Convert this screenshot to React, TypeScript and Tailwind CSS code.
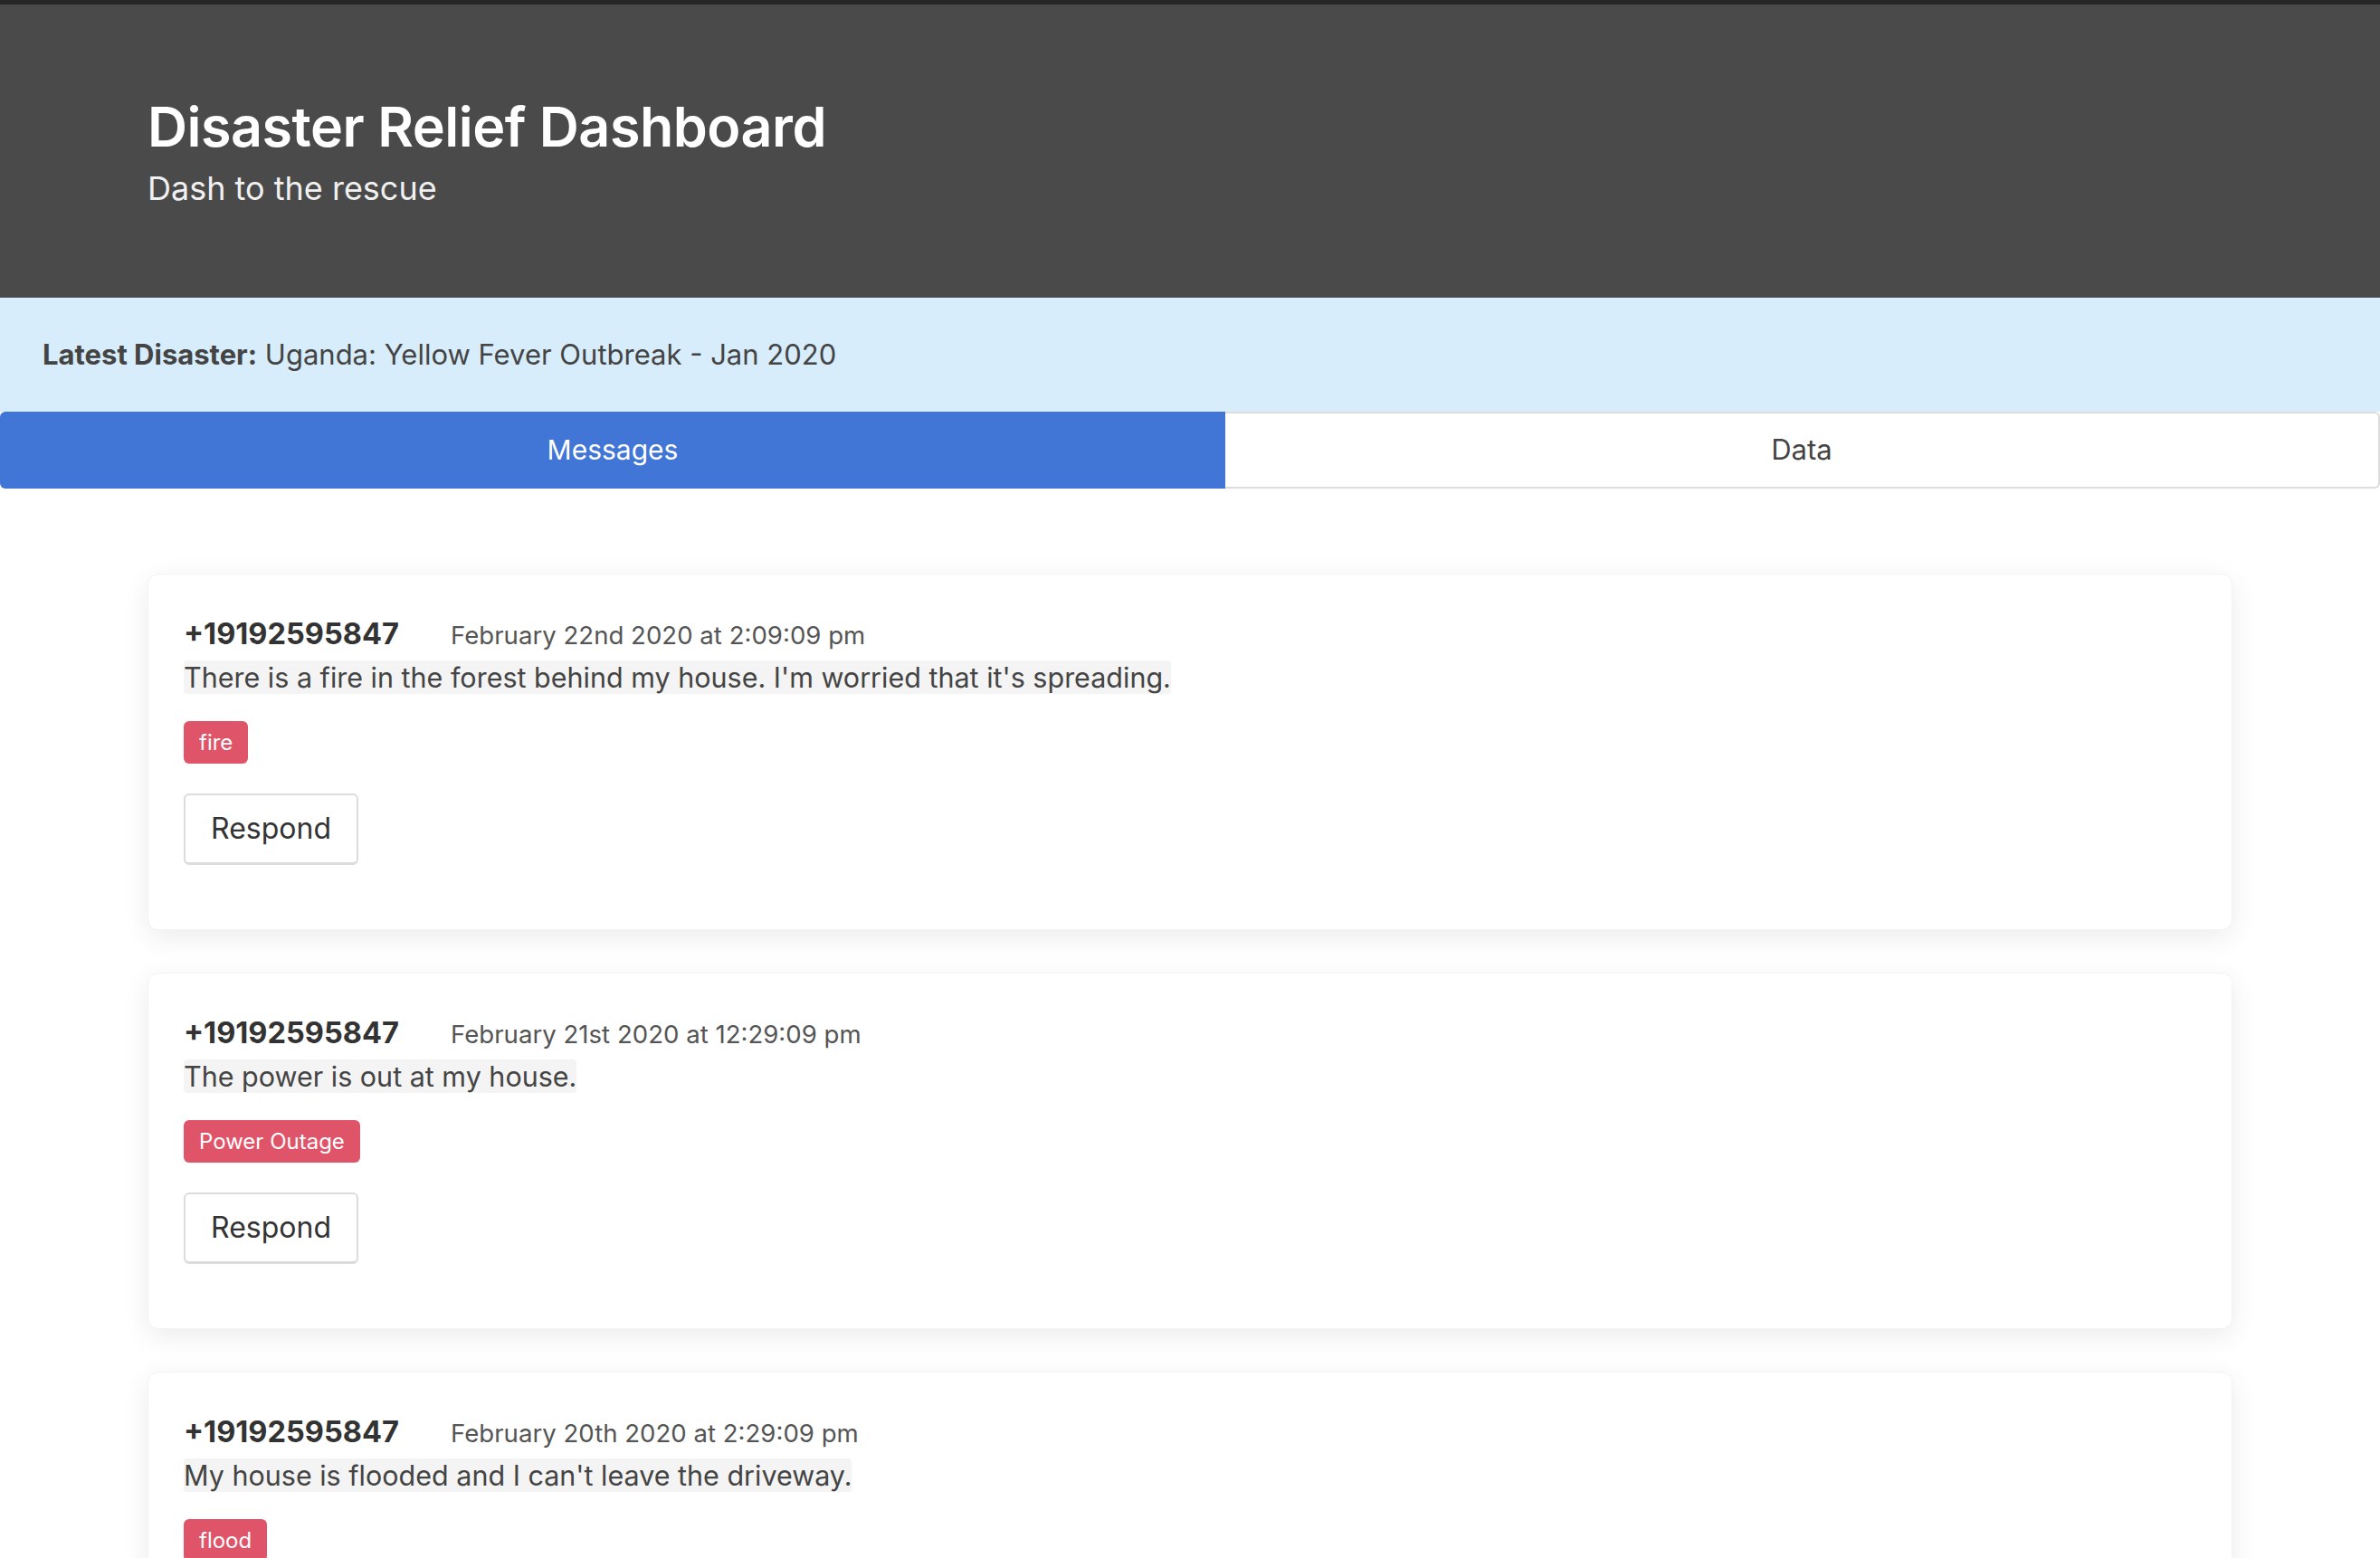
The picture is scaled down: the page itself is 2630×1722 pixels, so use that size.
import React from 'react';

type Message = {
  phone: string;
  date: string;
  text: string;
  tag: string;
};

const messages: Message[] = [
  {
    phone: '+19192595847',
    date: 'February 22nd 2020 at 2:09:09 pm',
    text: "There is a fire in the forest behind my house. I'm worried that it's spreading.",
    tag: 'fire',
  },
  {
    phone: '+19192595847',
    date: 'February 21st 2020 at 12:29:09 pm',
    text: 'The power is out at my house.',
    tag: 'Power Outage',
  },
  {
    phone: '+19192595847',
    date: 'February 20th 2020 at 2:29:09 pm',
    text: "My house is flooded and I can't leave the driveway.",
    tag: 'flood',
  },
];

// Single message card
const MessageCard: React.FC<{ message: Message }> = ({ message }) => {
  return (
    <div className="bg-white rounded-[12px] border border-[#f3f3f3] shadow-[0_8px_30px_rgba(0,0,0,0.08)] px-[39px] pt-[42px] pb-[71px]">
      <div className="flex items-baseline h-[46px] leading-[46px]">
        <span className="text-[32.6px] font-bold text-[#333]">{message.phone}</span>
        <span className="text-[27.6px] text-[#555] ml-[57px]">{message.date}</span>
      </div>
      <p className="mt-[3px] text-[30.5px] leading-[45px] text-[#444]">
        <span className="bg-[#f4f4f4] rounded-[4px]">{message.text}</span>
      </p>
      <div className="mt-[26px] flex">
        <span className="h-[47px] px-[17px] flex items-center rounded-[6px] bg-[#e05469] text-white text-[24px]">
          {message.tag}
        </span>
      </div>
      <button className="mt-[33px] w-[193px] h-[79px] rounded-[6px] border-2 border-b-[3px] border-[#dcdcdc] bg-white text-[32px] text-[#333]">
        Respond
      </button>
    </div>
  );
};

const App: React.FC = () => {
  return (
    <div className="min-h-screen bg-white font-['Inter','Liberation_Sans',sans-serif]">
      {/* Header */}
      <header className="border-t-[5px] border-[#262626] bg-[#4a4a4a] h-[329px] px-[163px] pt-[98px]">
        <h1 className="text-[61px] leading-[74px] font-semibold text-white tracking-[-0.5px]">
          Disaster Relief Dashboard
        </h1>
        <p className="mt-[8px] text-[36px] leading-[46px] text-[#f0f0f0]">Dash to the rescue</p>
      </header>

      {/* Latest disaster banner */}
      <div className="bg-[#d7edfb] px-[47px] py-[39px] text-[31px] leading-[48px] text-[#444]">
        <span className="font-bold">Latest Disaster:</span> Uganda: Yellow Fever Outbreak - Jan 2020
      </div>

      {/* Tabs */}
      <div className="flex h-[85px] text-[30px]">
        <div className="w-[1354px] flex items-center justify-center bg-[#4175d6] text-white rounded-l-[6px]">
          Messages
        </div>
        <div className="flex-1 flex items-center justify-center bg-white text-[#444] text-[31px] border-2 border-l-0 border-[#dcdcdc] rounded-r-[6px]">
          Data
        </div>
      </div>

      {/* Message list */}
      <main className="px-[163px] pt-[94px] flex flex-col gap-[47px]">
        {messages.map((m, i) => (
          <MessageCard key={i} message={m} />
        ))}
      </main>
    </div>
  );
};

export default App;
